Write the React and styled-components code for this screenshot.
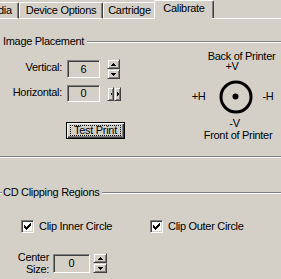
import React from "react";
import styled, { createGlobalStyle } from "styled-components";

const GlobalStyle = createGlobalStyle`
  html, body {
    margin: 0;
    padding: 0;
    background: #d4d0c8;
  }
  body {
    font-family: "Liberation Sans", Arial, sans-serif;
    font-size: 11px;
    letter-spacing: -0.3px;
    color: #000;
    overflow: hidden;
  }
`;

const Window = styled.div`
  width: 281px;
  height: 279px;
  overflow: hidden;
  background: #d4d0c8;
`;

const TabStrip = styled.div`
  display: flex;
  align-items: flex-end;
  height: 19px;
  margin-left: -24px;
`;

const Tab = styled.div`
  box-sizing: border-box;
  flex: none;
  width: ${p => p.$width}px;
  height: ${p => (p.$active ? 19 : 17)}px;
  margin: 0 ${p => (p.$active ? -2 : 0)}px;
  padding-top: 1px;
  line-height: 13px;
  text-align: center;
  white-space: nowrap;
  background: #d4d0c8;
  border-top: 1px solid #fff;
  border-left: 1px solid #fff;
  border-right: 1px solid #404040;
  border-bottom: ${p => (p.$active ? "none" : "1px solid #fff")};
  border-radius: 2px 2px 0 0;
  box-shadow: inset -1px 0 0 #808080;
`;

const TabFiller = styled.div`
  flex: 1;
  height: 19px;
  box-sizing: border-box;
  border-bottom: 1px solid #fff;
`;

const Panel = styled.div`
  padding-top: 16px;
`;

const GroupHeader = styled.div`
  display: flex;
  align-items: center;
  height: 13px;
  line-height: 13px;
  margin-top: ${p => p.$gap || 0}px;
`;

const GroupTitle = styled.span`
  padding: 0 3px 0 ${p => (p.$lead ? 1 : 3)}px;
  white-space: nowrap;
`;

const Rule = styled.div`
  flex: ${p => (p.$width ? "none" : 1)};
  width: ${p => (p.$width ? `${p.$width}px` : "auto")};
  height: 0;
  border-top: 1px solid #808080;
  border-bottom: 1px solid #fff;
`;

const Separator = styled.div`
  margin-top: 16px;
  border-top: 1px solid #808080;
  border-bottom: 1px solid #fff;
`;

const PlacementBody = styled.div`
  display: flex;
`;

const Fields = styled.div`
  width: 190px;
  flex: none;
  padding-top: 11px;
  display: flex;
  flex-direction: column;
`;

const FieldRow = styled.div`
  display: flex;
  align-items: center;
  margin-top: ${p => p.$gap || 0}px;
`;

const FieldLabel = styled.div`
  width: ${p => p.$width}px;
  flex: none;
  text-align: right;
  line-height: ${p => p.$lh || 13}px;
  margin-right: ${p => p.$space}px;
  margin-bottom: ${p => p.$raise || 0}px;
`;

const EditBox = styled.div`
  box-sizing: border-box;
  width: ${p => p.$width}px;
  height: ${p => p.$height}px;
  flex: none;
  display: flex;
  align-items: center;
  justify-content: center;
  line-height: 13px;
  border-top: 1px solid #808080;
  border-left: 1px solid #808080;
  border-right: 1px solid #fff;
  border-bottom: 1px solid #fff;
  box-shadow: inset 1px 1px 0 #404040, inset -1px -1px 0 #d4d0c8;
  margin-right: ${p => p.$space}px;
`;

const Spinner = styled.div`
  display: flex;
  flex-direction: ${p => (p.$horizontal ? "row" : "column")};
  flex: none;
`;

const SpinButton = styled.div`
  box-sizing: border-box;
  width: ${p => p.$w}px;
  height: ${p => p.$h}px;
  display: flex;
  align-items: center;
  justify-content: center;
  background: #d4d0c8;
  border-top: 1px solid #d4d0c8;
  border-left: 1px solid #d4d0c8;
  border-right: 1px solid #404040;
  border-bottom: 1px solid #404040;
  box-shadow: inset 1px 1px 0 #fff, inset -1px -1px 0 #808080;
`;

const PushButton = styled.button`
  box-sizing: border-box;
  width: 59px;
  height: 17px;
  margin: 20px 0 0 66px;
  padding: 0 3px;
  display: flex;
  align-items: center;
  font: inherit;
  letter-spacing: inherit;
  color: #000;
  background: #d4d0c8;
  border: 1px solid #000;
  box-shadow: inset 1px 1px 0 #fff, inset -1px -1px 0 #404040,
    inset -2px -2px 0 #808080;
`;

const FocusRing = styled.span`
  flex: 1;
  height: 11px;
  box-sizing: border-box;
  border: 1px dotted #000;
  line-height: 9px;
  text-align: center;
`;

const Diagram = styled.div`
  flex: 1;
  display: grid;
  grid-template-columns: 1fr 34px 1fr;
  padding-top: 3px;
  line-height: 10px;
`;

const DiagramLabel = styled.div`
  grid-column: 1 / -1;
  justify-self: center;
  white-space: nowrap;
  margin-left: ${p => (p.$shift > 0 ? p.$shift * 2 : 0)}px;
  margin-right: ${p => (p.$shift < 0 ? -p.$shift * 2 : 0)}px;
  margin-top: ${p => p.$top || 0}px;
`;

const SideLabel = styled.div`
  align-self: center;
  margin-top: 7px;
  justify-self: ${p => (p.$side === "left" ? "end" : "start")};
  margin-right: ${p => (p.$side === "left" ? 13 : 0)}px;
  margin-left: ${p => (p.$side === "right" ? 10 : 0)}px;
`;

const Target = styled.svg`
  display: block;
  margin-top: 9px;
`;

const CheckRow = styled.div`
  display: grid;
  grid-template-columns: 129px auto;
  padding-left: 21px;
  margin-top: 21px;
`;

const CheckItem = styled.label`
  display: flex;
  align-items: center;
  gap: 5px;
  line-height: 13px;
  white-space: nowrap;
`;

const CheckBox = styled.span`
  box-sizing: border-box;
  width: 13px;
  height: 13px;
  display: flex;
  align-items: center;
  justify-content: center;
  background: #fff;
  border-top: 1px solid #808080;
  border-left: 1px solid #808080;
  border-right: 1px solid #fff;
  border-bottom: 1px solid #fff;
  box-shadow: inset 1px 1px 0 #404040, inset -1px -1px 0 #d4d0c8;
`;

const Arrow = ({ dir }) => {
  const shapes = {
    up: { w: 5, h: 3, pts: "0,3 5,3 2.5,0" },
    down: { w: 5, h: 3, pts: "0,0 5,0 2.5,3" },
    left: { w: 2, h: 4, pts: "2,0 2,4 0,2" },
    right: { w: 2, h: 4, pts: "0,0 0,4 2,2" },
  };
  const s = shapes[dir];
  return (
    <svg width={s.w} height={s.h} viewBox={`0 0 ${s.w} ${s.h}`} shapeRendering="crispEdges">
      <polygon points={s.pts} fill="#000" />
    </svg>
  );
};

const Check = () => (
  <svg width="7" height="7" viewBox="0 0 7 7" shapeRendering="crispEdges">
    <path
      d="M6 0h1v3h-1zM5 1h1v3h-1zM4 2h1v3h-1zM3 3h1v3h-1zM2 4h1v3h-1zM1 3h1v3h-1zM0 2h1v3h-1z"
      fill="#000"
    />
  </svg>
);

const UpDown = ({ w = 13, h = 10 }) => (
  <Spinner>
    <SpinButton $w={w} $h={h}><Arrow dir="up" /></SpinButton>
    <SpinButton $w={w} $h={h}><Arrow dir="down" /></SpinButton>
  </Spinner>
);

const LeftRight = () => (
  <Spinner $horizontal>
    <SpinButton $w={7} $h={14}><Arrow dir="left" /></SpinButton>
    <SpinButton $w={7} $h={14}><Arrow dir="right" /></SpinButton>
  </Spinner>
);

export default function App() {
  return (
    <Window>
      <GlobalStyle />
      <TabStrip>
        <Tab $width={43}>Media</Tab>
        <Tab $width={84}>Device Options</Tab>
        <Tab $width={53}>Cartridge</Tab>
        <Tab $width={60} $active>Calibrate</Tab>
        <TabFiller />
      </TabStrip>

      <Panel>
        <GroupHeader>
          <GroupTitle>Image Placement</GroupTitle>
          <Rule />
        </GroupHeader>

        <PlacementBody>
          <Fields>
            <FieldRow>
              <FieldLabel $width={62} $space={5} $raise={3}>Vertical:</FieldLabel>
              <EditBox $width={33} $height={18} $space={7}>6</EditBox>
              <UpDown />
            </FieldRow>
            <FieldRow $gap={6}>
              <FieldLabel $width={62} $space={5} $raise={2}>Horizontal:</FieldLabel>
              <EditBox $width={33} $height={17} $space={7}>0</EditBox>
              <LeftRight />
            </FieldRow>
            <PushButton type="button">
              <FocusRing>Test Print</FocusRing>
            </PushButton>
          </Fields>

          <Diagram>
            <DiagramLabel $shift={6}>Back of Printer</DiagramLabel>
            <DiagramLabel $shift={-3.5}>+V</DiagramLabel>
            <SideLabel $side="left">+H</SideLabel>
            <Target width="34" height="34" viewBox="0 0 34 34">
              <circle cx="17" cy="17" r="15" fill="none" stroke="#000" strokeWidth="3" />
              <circle cx="16.5" cy="16.5" r="3" fill="#000" />
            </Target>
            <SideLabel $side="right">-H</SideLabel>
            <DiagramLabel $shift={-1} $top={4}>-V</DiagramLabel>
            <DiagramLabel $shift={2.5} $top={2}>Front of Printer</DiagramLabel>
          </Diagram>
        </PlacementBody>

        <Separator />

        <GroupHeader $gap={28}>
          <Rule $width={2} />
          <GroupTitle $lead>CD Clipping Regions</GroupTitle>
          <Rule />
        </GroupHeader>

        <CheckRow>
          <CheckItem>
            <CheckBox><Check /></CheckBox>
            Clip Inner Circle
          </CheckItem>
          <CheckItem>
            <CheckBox><Check /></CheckBox>
            Clip Outer Circle
          </CheckItem>
        </CheckRow>

        <FieldRow $gap={18}>
          <FieldLabel $width={49} $space={4} $lh={12}>
            Center
            <br />
            Size:
          </FieldLabel>
          <EditBox $width={37} $height={19} $space={3}>0</EditBox>
          <UpDown w={14} h={10} />
        </FieldRow>
      </Panel>
    </Window>
  );
}
